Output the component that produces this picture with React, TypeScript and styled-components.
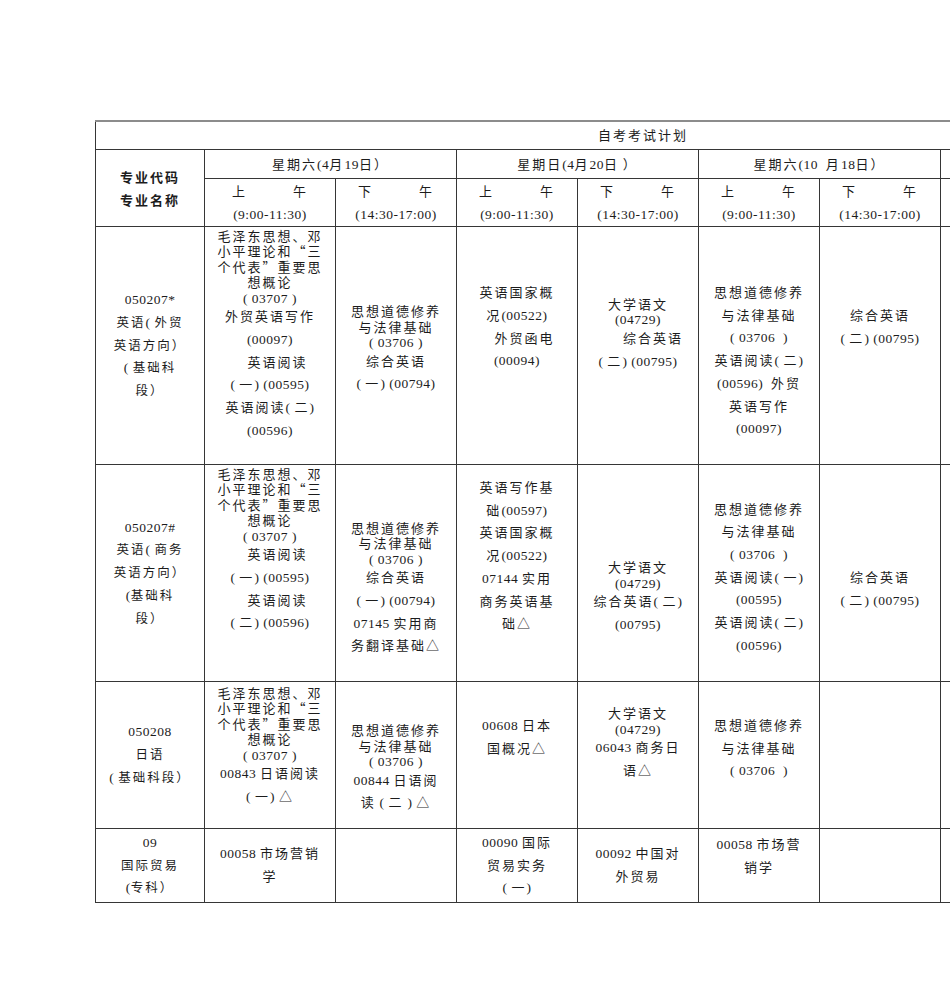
import styled, { createGlobalStyle } from 'styled-components';

const GlobalStyle = createGlobalStyle`
  html, body {
    margin: 0;
    background: #fff;
  }
  body {
    overflow: hidden;
  }
`;

const Page = styled.div`
  width: 950px;
  height: 987px;
  box-sizing: border-box;
  padding: 120px 0 0 95px;
  overflow: hidden;
`;

const Sheet = styled.table`
  border-collapse: collapse;
  table-layout: fixed;
  width: 855px;
  color: #1c1c1c;
  font-family: 'Noto Sans CJK SC', sans-serif;
  font-size: 13px;
  letter-spacing: 2px;
`;

const Row = styled.tr<{ $h: number }>`
  height: ${(p) => p.$h}px;
`;

const Cell = styled.td`
  border: 1px solid #363636;
  padding: 0;
  text-align: center;
  vertical-align: middle;
  overflow: hidden;
`;

const TitleCell = styled(Cell)`
  border-top: 2px solid #8c8c8c;
  border-right-color: #9a9a9a;
  padding-left: 240px;
`;

const EdgeCell = styled(Cell)`
  border-right-color: #9a9a9a;
`;

const HeadLabel = styled(Cell)`
  font-weight: 700;
`;

const Halves = styled.div`
  display: flex;
  justify-content: space-between;
  width: 76px;
  height: 23px;
  line-height: 23px;
  margin: 0 auto;
`;

const BodyCell = styled(Cell)<{ $dy: number }>`
  padding-top: ${(p) => Math.max(0, p.$dy * 2)}px;
  padding-bottom: ${(p) => Math.max(0, -p.$dy * 2)}px;
`;

const CodeCell = styled(BodyCell)`
  font-size: 12.5px;
`;

const Line = styled.div<{ $h?: number }>`
  white-space: pre;
  height: ${(p) => p.$h ?? 22.7}px;
  line-height: ${(p) => p.$h ?? 22.7}px;
`;

const Latin = styled.span`
  font-family: 'Liberation Serif', serif;
  font-size: 13.5px;
  letter-spacing: 0.5px;
`;

const ASCII = /^[\x20-\x7E]+$/;

const Txt = ({ s }: { s: string }) => (
  <>
    {s
      .split(/([\x20-\x7E]+)/)
      .filter(Boolean)
      .map((part, i) =>
        ASCII.test(part) ? <Latin key={i}>{part}</Latin> : <span key={i}>{part}</span>
      )}
  </>
);

type BlockData = { dense: boolean; lines: string[] };
type CellData = { dy: number; blocks: BlockData[] };
type RowData = { h: number; code: CellData; cells: CellData[] };

const d = (...lines: string[]): BlockData => ({ dense: true, lines });
const l = (...lines: string[]): BlockData => ({ dense: false, lines });
const c = (dy: number, ...blocks: BlockData[]): CellData => ({ dy, blocks });
const empty = c(0);

const MAO = d('毛泽东思想、邓', '小平理论和“三', '个代表”重要思', '想概论', '( 03707 )');
const MORAL = d('思想道德修养', '与法律基础', '( 03706 )');
const CHINESE = d('大学语文', '(04729)');

const ROWS: RowData[] = [
  {
    h: 238,
    code: c(0, l('050207*', '英语( 外贸', '英语方向）', '( 基础科', '段）')),
    cells: [
      c(-10.5, MAO, l('外贸英语写作', '(00097)', '　英语阅读', '( 一) (00595)', '英语阅读( 二)', '(00596)')),
      c(4, MORAL, l('综合英语', '( 一) (00794)')),
      c(-18.5, l('英语国家概', '况(00522)', '　外贸函电', '(00094)')),
      c(-11, CHINESE, l('　　综合英语', '( 二) (00795)')),
      c(15.5, l('思想道德修养', '与法律基础', '( 03706  )', '英语阅读( 二)', '(00596)  外贸', '英语写作', '(00097)')),
      c(-18.5, l('综合英语', '( 二) (00795)')),
    ],
  },
  {
    h: 217,
    code: c(0, l('050207#', '英语( 商务', '英语方向）', '(基础科', '段）')),
    cells: [
      c(-22.5, MAO, l('　英语阅读', '( 一) (00595)', '　英语阅读', '( 二) (00596)')),
      c(16, MORAL, l('综合英语', '( 一) (00794)', '07145 实用商', '务翻译基础△')),
      c(-17, l('英语写作基', '础(00597)', '英语国家概', '况(00522)', '07144 实用', '商务英语基', '础△')),
      c(25, CHINESE, l('综合英语( 二)', '(00795)')),
      c(4.5, l('思想道德修养', '与法律基础', '( 03706  )', '英语阅读( 一)', '(00595)', '英语阅读( 二)', '(00596)')),
      c(16, l('综合英语', '( 二) (00795)')),
    ],
  },
  {
    h: 147,
    code: c(0, l('050208', '日语', '( 基础科段）')),
    cells: [
      c(-8.5, MAO, l('00843 日语阅读', '( 一) △')),
      c(13.5, MORAL, l('00844 日语阅', '读 ( 二 ) △')),
      c(-18, l('00608 日本', '国概况△')),
      c(-11, CHINESE, l('06043 商务日', '语△')),
      c(-6.5, l('思想道德修养', '与法律基础', '( 03706  )')),
      empty,
    ],
  },
  {
    h: 74,
    code: c(0, l('09', '国际贸易', '(专科）')),
    cells: [
      c(0, l('00058 市场营销', '学')),
      empty,
      c(0, l('00090 国际', '贸易实务', '( 一)')),
      c(0, l('00092 中国对', '外贸易')),
      c(-9.5, l('00058 市场营', '销学')),
      empty,
    ],
  },
];

const DAYS = ['星期六(4月19日）', '星期日(4月20日 ）', '星期六(10  月18日）'];
const HALVES = [
  { first: '上', time: '(9:00-11:30)' },
  { first: '下', time: '(14:30-17:00)' },
];
const WIDTHS = [109, 131, 121, 121, 121, 121, 121, 10];

const Content = ({ data }: { data: CellData }) => (
  <>
    {data.blocks.map((b, i) => (
      <div key={i}>
        {b.lines.map((line, j) => (
          <Line key={j} $h={b.dense ? 15.5 : 22.7}>
            <Txt s={line} />
          </Line>
        ))}
      </div>
    ))}
  </>
);

export default function App() {
  return (
    <Page>
      <GlobalStyle />
      <Sheet>
        <colgroup>
          {WIDTHS.map((w, i) => (
            <col key={i} style={{ width: w }} />
          ))}
        </colgroup>
        <tbody>
          <Row $h={28}>
            <TitleCell colSpan={8}>
              <Line $h={20}>自考考试计划</Line>
            </TitleCell>
          </Row>
          <Row $h={29}>
            <HeadLabel rowSpan={2}>
              <Line $h={23}>专业代码</Line>
              <Line $h={23}>专业名称</Line>
            </HeadLabel>
            {DAYS.map((day) => (
              <Cell key={day} colSpan={2}>
                <Line $h={20}>
                  <Txt s={day} />
                </Line>
              </Cell>
            ))}
            <EdgeCell />
          </Row>
          <Row $h={48}>
            {DAYS.flatMap((day) =>
              HALVES.map((half) => (
                <Cell key={day + half.first}>
                  <Halves>
                    <span>{half.first}</span>
                    <span>午</span>
                  </Halves>
                  <Line $h={23}>
                    <Txt s={half.time} />
                  </Line>
                </Cell>
              ))
            )}
            <EdgeCell />
          </Row>
          {ROWS.map((row, r) => (
            <Row key={r} $h={row.h}>
              <CodeCell $dy={row.code.dy}>
                <Content data={row.code} />
              </CodeCell>
              {row.cells.map((cell, i) => (
                <BodyCell key={i} $dy={cell.dy}>
                  <Content data={cell} />
                </BodyCell>
              ))}
              <EdgeCell />
            </Row>
          ))}
        </tbody>
      </Sheet>
    </Page>
  );
}
